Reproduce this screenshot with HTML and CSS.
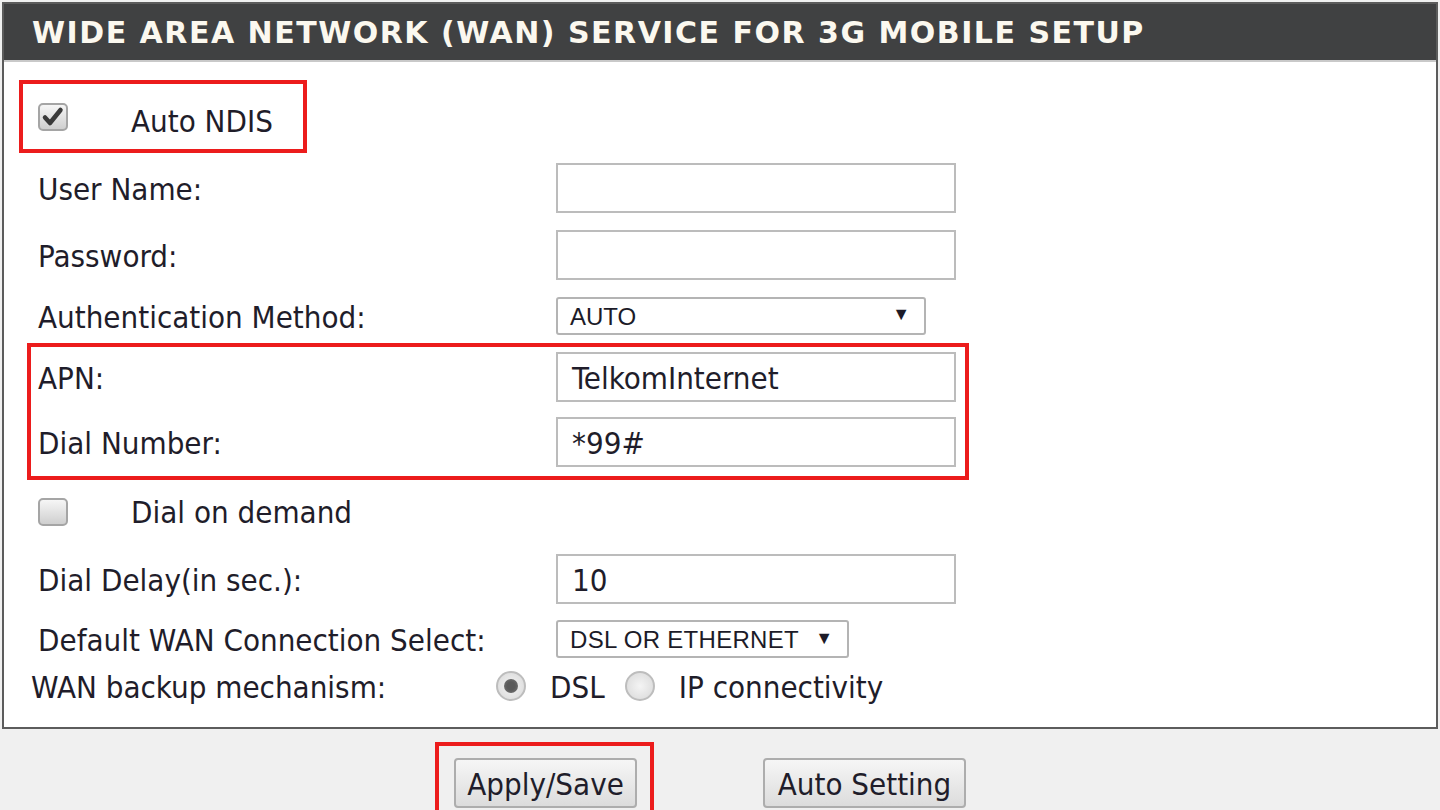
FILE: index.html
```html
<!DOCTYPE html>
<html>
<head>
<meta charset="utf-8">
<link rel="stylesheet" href="styles.css">
</head>
<body>
<div class="panel">
  <div class="head">WIDE AREA NETWORK (WAN) SERVICE FOR 3G MOBILE SETUP</div>
  <div class="body">
    <div class="mark mark-ndis">
      <span class="cb">
        <svg viewBox="0 0 26 24" width="26" height="24"><path d="M5 12.5 L10 18 L20.5 5" fill="none" stroke="#3a3a3a" stroke-width="4.5" stroke-linecap="round" stroke-linejoin="round"/></svg>
      </span>
      <span class="cb-label ndis-label">Auto NDIS</span>
    </div>
    <div class="row r-user"><span class="lbl">User Name:</span><span class="inp"></span></div>
    <div class="row r-pass"><span class="lbl">Password:</span><span class="inp"></span></div>
    <div class="row r-auth"><span class="lbl">Authentication Method:</span><span class="sel sel-auth"><span>AUTO</span><span class="arr">▼</span></span></div>
    <div class="mark mark-apn">
      <div class="row r-apn"><span class="lbl">APN:</span><span class="inp">TelkomInternet</span></div>
      <div class="row r-dial"><span class="lbl">Dial Number:</span><span class="inp">*99#</span></div>
    </div>
    <div class="row r-demand"><span class="cb"></span><span class="cb-label">Dial on demand</span></div>
    <div class="row r-delay"><span class="lbl">Dial Delay(in sec.):</span><span class="inp">10</span></div>
    <div class="row r-def"><span class="lbl">Default WAN Connection Select:</span><span class="sel sel-def"><span>DSL OR ETHERNET</span><span class="arr">▼</span></span></div>
    <div class="row r-backup">
      <span class="lbl lbl-backup">WAN backup mechanism:</span>
      <span class="radio on"></span><span class="rlbl">DSL</span>
      <span class="radio"></span><span class="rlbl">IP connectivity</span>
    </div>
  </div>
</div>
<div class="actions">
  <div class="mark mark-btn"><span class="btn">Apply/Save</span></div>
  <span class="btn btn-auto">Auto Setting</span>
</div>
</body>
</html>
```
FILE: styles.css
```css
html, body {
  margin: 0;
  padding: 0;
  background: #f0f0f0;
  height: 810px;
  overflow: hidden;
}
body {
  font-family: "DejaVu Sans Condensed", "DejaVu Sans", sans-serif;
  font-size: 31px;
  color: #1f1d2a;
}
.panel {
  margin: 2px 2px 0 2px;
  border: 2px solid #5c5c5c;
  background: #fff;
}
.head {
  box-sizing: border-box;
  height: 58px;
  background: #404142;
  border-bottom: 2px solid #c9c9c9;
  color: #fbf8ef;
  font-family: "DejaVu Sans", sans-serif;
  font-weight: bold;
  font-size: 30px;
  line-height: 58px;
  padding-left: 28px;
  letter-spacing: 1.5px;
  white-space: nowrap;
}
.body {
  padding-top: 18px;
  padding-bottom: 19px;
  display: flex;
  flex-direction: column;
  align-items: flex-start;
}
.mark {
  border: 4px solid #ec1c1c;
  box-sizing: border-box;
}
.mark-ndis {
  margin-left: 15px;
  width: 288px;
  height: 73px;
  display: flex;
  align-items: center;
  padding-left: 15px;
}
.ndis-label { padding-top: 8px; }
.row {
  display: flex;
  align-items: center;
  padding-left: 34px;
  box-sizing: border-box;
}
.lbl {
  width: 518px;
  flex: none;
  padding-top: 2px;
}
.r-user { height: 69px; }
.r-pass { height: 66px; }
.r-auth { height: 55px; }
.mark-apn {
  margin-left: 23px;
  width: 942px;
  height: 137px;
}
.mark-apn .row { padding-left: 7px; }
.r-apn { height: 60px; }
.r-dial { height: 69px; }
.r-demand { height: 64px; }
.r-delay { height: 70px; }
.r-def { height: 50px; }
.r-backup { height: 44px; padding-left: 27px; }
.inp {
  width: 400px;
  height: 50px;
  box-sizing: border-box;
  border: 2px solid #bcbcbc;
  background: #fff;
  padding-left: 14px;
  padding-top: 2px;
  display: flex;
  align-items: center;
  font-size: 31px;
}
.sel {
  height: 38px;
  box-sizing: border-box;
  border: 2px solid #b4b4b4;
  border-radius: 3px;
  background: #fff;
  display: flex;
  align-items: center;
  justify-content: space-between;
  padding: 2px 12px 0 12px;
  font-family: "Liberation Sans", Arial, sans-serif;
  font-size: 24px;
  color: #1c1b28;
}
.sel-auth { width: 370px; padding-right: 14px; }
.sel-def { width: 293px; letter-spacing: 0.3px; padding-right: 14px; }
.arr { font-size: 18px; margin-top: -4px; letter-spacing: 0; }
.cb {
  width: 30px;
  height: 28px;
  box-sizing: border-box;
  border: 2px solid #a5a5a5;
  border-radius: 5px;
  background: linear-gradient(#f6f6f6, #cfcfcf);
  display: inline-flex;
  align-items: center;
  justify-content: center;
  flex: none;
}
.cb svg { display: block; flex: none; }
.cb-label { margin-left: 63px; }
.lbl-backup { width: 465px; }
.radio {
  width: 30px;
  height: 30px;
  box-sizing: border-box;
  border-radius: 50%;
  border: 2px solid #bdbdbd;
  background: radial-gradient(circle, #f4f4f4 0%, #d8d8d8 100%);
  flex: none;
  position: relative;
}
.radio.on::after {
  content: "";
  position: absolute;
  left: 6px;
  top: 6px;
  width: 14px;
  height: 14px;
  border-radius: 50%;
  background: radial-gradient(circle, #5a5a5a 40%, #7a7a7a 100%);
}
.rlbl { margin-left: 24px; margin-right: 20px; padding-top: 2px; }
.actions {
  display: flex;
  align-items: flex-start;
  padding-left: 435px;
  padding-top: 13px;
}
.mark-btn {
  width: 219px;
  height: 80px;
  padding: 12px 0 0 15px;
}
.btn {
  display: inline-flex;
  align-items: center;
  justify-content: center;
  height: 50px;
  box-sizing: border-box;
  border: 2px solid #adadad;
  border-radius: 4px;
  background: linear-gradient(#f6f6f6, #dcdcdc);
  font-size: 31px;
  width: 183px;
  padding-top: 2px;
  color: #1f1d2a;
}
.btn-auto {
  width: 203px;
  margin-left: 109px;
  margin-top: 16px;
}
```
